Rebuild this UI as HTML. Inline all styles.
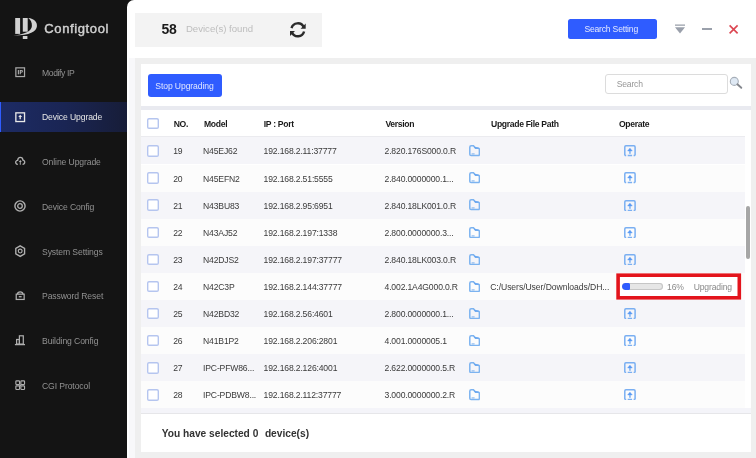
<!DOCTYPE html>
<html><head><meta charset="utf-8">
<style>
*{margin:0;padding:0;box-sizing:border-box}
html,body{width:756px;height:458px;overflow:hidden;background:#141414;font-family:"Liberation Sans",sans-serif}
#wrap{position:absolute;left:0;top:0;width:756px;height:458px;filter:blur(0.3px)}
.a{position:absolute}
.t{position:absolute;white-space:nowrap;line-height:1}
#side{left:0;top:0;width:127px;height:458px;background:#141414}
#main{left:126.5px;top:0;width:629.5px;height:458px;background:#fff;border-top-left-radius:7px}
.nav{left:42px;font-size:8.6px;color:#929292;letter-spacing:-0.1px}
.ico{left:14.9px;width:10.4px;height:10.4px;overflow:visible}
.hd{font-weight:bold;font-size:8.6px;color:#1a1a1a;letter-spacing:-0.32px}
.cell{font-size:8.6px;color:#3a3a3a;letter-spacing:-0.15px}
.cb{position:absolute;left:147.1px;width:11.6px;height:11.6px;box-shadow:inset 0 0 0 1.4px #b5c5ef;border-radius:2px;background:#fff}
.row{position:absolute;left:141px;width:604px;height:27.1px}
.g{background:#f5f5f9}
.w{background:#fcfcfc}
</style></head><body><div id="wrap">
<div id="side" class="a">
  <!-- logo -->
  <svg class="a" style="left:12px;top:16px" width="28" height="25" viewBox="0 0 28 25">
    <rect x="3.2" y="2" width="4.9" height="15.9" fill="#d2d2d2"/>
    <rect x="10.8" y="2" width="4.9" height="13.7" fill="#d2d2d2"/>
    <rect x="10.8" y="20" width="4.6" height="3" fill="#d2d2d2"/>
    <path d="M16.3 2 C 22 2.5 25.5 6 24.9 10.5 C 24.3 15.5 18 19.5 1.4 19.4 C 13 18.4 19.6 15.2 19.9 10 C 20.1 6.5 18.6 3.5 16.3 2 Z" fill="#d2d2d2"/>
  </svg>
  <div class="t" style="left:44.3px;top:21.8px;font-size:13px;font-weight:normal;-webkit-text-stroke:0.45px #d0d0d0;color:#d0d0d0;letter-spacing:0.62px">Configtool</div>

  <div class="a" style="left:0;top:101.8px;width:126.5px;height:29.9px;background:linear-gradient(90deg,#1d2b64 0%,#1a2554 50%,#171d38 100%);border-left:1px solid #2f5cff"></div>

  <!-- icons -->
  <svg class="a ico" style="top:66.80px" viewBox="0 0 11 11"><rect x="0.9" y="0.9" width="9.2" height="9.2" fill="none" stroke="#a8a8a8" stroke-width="1.3"/><rect x="3" y="3.2" width="1.1" height="4.6" fill="#b8b8b8"/><path d="M5 3.2 H7.2 Q8.3 3.2 8.3 4.5 Q8.3 5.8 7.2 5.8 H6.1 V7.8 H5 Z M6.1 4.1 V4.9 H7 Q7.3 4.9 7.3 4.5 Q7.3 4.1 7 4.1 Z" fill="#b8b8b8" fill-rule="evenodd"/></svg>
  <svg class="a ico" style="top:111.80px" viewBox="0 0 11 11"><rect x="0.9" y="0.9" width="9.2" height="9.2" fill="none" stroke="#e8e8e8" stroke-width="1.4"/><path d="M5.5 3 L7.6 5.4 H6.2 V7.8 H4.8 V5.4 H3.4 Z" fill="#e8e8e8"/></svg>
  <svg class="a ico" style="top:155.80px" viewBox="0 0 11 11"><path d="M3 8.8 C1 8.8 0.4 7 0.9 5.8 C1.3 4.9 2.2 4.5 2.8 4.6 C3 2.7 4.3 1.4 5.6 1.4 C7.2 1.4 8.3 2.7 8.4 4.4 C9.6 4.5 10.4 5.5 10.3 6.6 C10.2 7.9 9.2 8.8 8 8.8" fill="none" stroke="#b0b0b0" stroke-width="1.4"/><path d="M5.6 4.2 L7.2 6.4 H6.1 V9.2 H5.1 V6.4 H4 Z" fill="#b0b0b0"/></svg>
  <svg class="a ico" style="top:200.1px;left:14px;width:12px;height:12px" viewBox="0 0 12 12"><circle cx="6" cy="6" r="5.1" fill="none" stroke="#b0b0b0" stroke-width="1.4"/><circle cx="6" cy="6" r="2.3" fill="none" stroke="#b0b0b0" stroke-width="1.3"/></svg>
  <svg class="a ico" style="top:244.6px;left:15px;width:10.4px;height:12.2px" viewBox="0 0 10.4 12.2"><path d="M5.2 0.8 L9.6 3.3 V8.9 L5.2 11.4 L0.8 8.9 V3.3 Z" fill="none" stroke="#b0b0b0" stroke-width="1.35"/><circle cx="5.2" cy="6.1" r="1.9" fill="none" stroke="#b0b0b0" stroke-width="1.2"/></svg>
  <svg class="a ico" style="top:290.30px" viewBox="0 0 11 11"><rect x="1.3" y="4.4" width="8.4" height="5.6" fill="none" stroke="#b0b0b0" stroke-width="1.3"/><path d="M2.6 4.4 C2.8 1.2 8.2 1.2 8.4 4.4" fill="none" stroke="#b0b0b0" stroke-width="1.3"/><rect x="4" y="6.4" width="3" height="1.4" fill="#b0b0b0"/></svg>
  <svg class="a ico" style="top:334.8px" viewBox="0 0 10.4 10.4"><path d="M-0.1 9.6 H10" stroke="#b0b0b0" stroke-width="1.3"/><rect x="1.6" y="4.5" width="2.8" height="4.6" fill="none" stroke="#b0b0b0" stroke-width="1.2"/><rect x="4.4" y="0.8" width="3.9" height="8.3" fill="none" stroke="#b0b0b0" stroke-width="1.2"/></svg>
  <svg class="a ico" style="top:379.60px" viewBox="0 0 11 11"><g fill="none" stroke="#b0b0b0" stroke-width="1.2"><rect x="0.9" y="0.9" width="3.9" height="3.9" rx="0.8"/><rect x="6.2" y="0.9" width="3.9" height="3.9" rx="0.8"/><rect x="0.9" y="6.2" width="3.9" height="3.9" rx="0.8"/><rect x="6.2" y="6.2" width="3.9" height="3.9" rx="0.8"/><path d="M4.8 4.8 L6.2 6.2 M6.2 4.8 L4.8 6.2"/></g></svg>

  <div class="t nav" style="top:68.60px;letter-spacing:-0.4px">Modify IP</div>
  <div class="t nav" style="top:113.35px;color:#e6e6e6">Device Upgrade</div>
  <div class="t nav" style="top:158.10px">Online Upgrade</div>
  <div class="t nav" style="top:202.85px">Device Config</div>
  <div class="t nav" style="top:247.60px">System Settings</div>
  <div class="t nav" style="top:292.35px">Password Reset</div>
  <div class="t nav" style="top:337.10px">Building Config</div>
  <div class="t nav" style="top:381.85px">CGI Protocol</div>
</div>

<div id="main" class="a"></div>

<!-- header -->
<div class="a" style="left:135px;top:13px;width:187px;height:34px;background:#f3f3f3"></div>
<div class="t" style="left:161.5px;top:21.8px;font-size:14px;font-weight:bold;color:#1a1a1a;letter-spacing:-0.4px">58</div>
<div class="t" style="left:185.9px;top:24.4px;font-size:9.6px;color:#bdbdbd">Device(s) found</div>
<svg class="a" style="left:289.6px;top:21.8px" width="16" height="16" viewBox="0 0 16 16">
  <path d="M1.52 6.12 A6.5 6.5 0 0 1 13.69 5.05" fill="none" stroke="#2b2b2b" stroke-width="2.4"/>
  <path d="M14.08 9.48 A6.5 6.5 0 0 1 1.91 10.55" fill="none" stroke="#2b2b2b" stroke-width="2.4"/>
  <path d="M10.6 6.7 H15.7 V1.6 Z" fill="#2b2b2b"/>
  <path d="M5 8.9 H-0.1 V14 Z" fill="#2b2b2b"/>
</svg>

<div class="a" style="left:567.5px;top:18.5px;width:89px;height:20px;background:#2f5cff;border-radius:2.5px"></div>
<div class="t" style="left:584.4px;top:24.7px;font-size:8.6px;color:#e4e9ff;letter-spacing:-0.2px">Search Setting</div>

<svg class="a" style="left:674px;top:23px" width="12" height="12" viewBox="0 0 12 12">
  <rect x="1" y="1.4" width="10" height="1.5" fill="#a9aeb7"/>
  <path d="M1 4.2 H11 L6 10.4 Z" fill="#9aa0ab"/>
</svg>
<div class="a" style="left:702px;top:28.2px;width:10px;height:1.8px;background:#9aa0ab"></div>
<svg class="a" style="left:728px;top:24px" width="11" height="11" viewBox="0 0 11 11">
  <path d="M1.6 1.4 L9.6 9.4 M9.6 1.4 L1.6 9.4" stroke="#dc4652" stroke-width="1.6"/>
</svg>

<!-- content container -->
<div class="a" style="left:128.5px;top:57.5px;width:6.5px;height:400.5px;background:#f8f8fa"></div>
<div class="a" style="left:135px;top:57.5px;width:621px;height:400.5px;background:#efefef"></div>
<div class="a" style="left:141px;top:63.5px;width:609.5px;height:42.6px;background:#fff"></div>
<div class="a" style="left:141px;top:106.1px;width:609.5px;height:4.3px;background:#e9eaf0"></div>
<div class="a" style="left:141px;top:110.4px;width:609.5px;height:298px;background:#fff"></div>
<div class="a" style="left:141px;top:136px;width:604px;height:1.4px;background:#ebebef"></div>
<div class="a" style="left:141px;top:408.4px;width:609.5px;height:4.8px;background:#f4f4f9"></div>
<div class="a" style="left:141px;top:413.2px;width:609.5px;height:1px;background:#e6e6e9"></div>
<div class="a" style="left:141px;top:414.2px;width:609.5px;height:37.8px;background:#fff"></div>

<div class="a" style="left:147.5px;top:74px;width:74.5px;height:23px;background:#2f5cff;border-radius:3px"></div>
<div class="t" style="left:155.3px;top:82.2px;font-size:8.6px;color:#e0e6ff;letter-spacing:-0.1px">Stop Upgrading</div>

<div class="a" style="left:605px;top:73.6px;width:122.5px;height:20.4px;border:1px solid #dcdcdc;border-radius:3px;background:#fff"></div>
<div class="t" style="left:616.7px;top:80.2px;font-size:8.6px;color:#969696;letter-spacing:-0.2px">Search</div>
<svg class="a" style="left:729px;top:76px" width="15" height="14" viewBox="0 0 15 14">
  <circle cx="5.3" cy="5.4" r="4" fill="#dfe9f4" stroke="#a6aeb8" stroke-width="1.1"/>
  <path d="M8.4 8.3 L12.3 11.8" stroke="#85888e" stroke-width="1.9" stroke-linecap="round"/>
</svg>

<!-- table header -->
<div class="cb" style="top:117.7px"></div>
<div class="t hd" style="left:173.7px;top:119.9px">NO.</div>
<div class="t hd" style="left:204px;top:119.9px">Model</div>
<div class="t hd" style="left:263.8px;top:119.9px">IP : Port</div>
<div class="t hd" style="left:385.4px;top:119.9px">Version</div>
<div class="t hd" style="left:491px;top:119.9px">Upgrade File Path</div>
<div class="t hd" style="left:619px;top:119.9px">Operate</div>

<div id="rows"><div class="row g" style="top:137.40px"></div>
<div class="row w" style="top:164.50px"></div>
<div class="row g" style="top:191.60px"></div>
<div class="row w" style="top:218.70px"></div>
<div class="row g" style="top:245.80px"></div>
<div class="row w" style="top:272.90px"></div>
<div class="row g" style="top:300.00px"></div>
<div class="row w" style="top:327.10px"></div>
<div class="row g" style="top:354.20px"></div>
<div class="row w" style="top:381.30px"></div>
<div class="cb" style="top:145.20px"></div>
<div class="t cell" style="left:173.2px;top:147.45px">19</div>
<div class="t cell" style="left:203px;top:147.45px">N45EJ62</div>
<div class="t cell" style="left:263.5px;top:147.45px">192.168.2.11:37777</div>
<div class="t cell" style="left:384.5px;top:147.45px">2.820.176S000.0.R</div>
<svg class="a" style="left:469.3px;top:145.25px" width="11.2" height="11.4" viewBox="0 0 11.2 11.4"><path d="M0.8 2.2 Q0.8 0.8 2.2 0.8 H4.5 L6.5 3.2 H9.1 Q10.4 3.2 10.4 4.5 V9.2 Q10.4 10.6 9.1 10.6 H2.1 Q0.8 10.6 0.8 9.2 Z" fill="none" stroke="#7cb3f0" stroke-width="1.5"/><path d="M4.6 1.4 L6.3 3.4 H9.6 L9.6 2.6 Z" fill="#5d9ff0" opacity="0.8"/><path d="M2.6 8.9 H5.6" stroke="#7cb2ee" stroke-width="1"/></svg>
<svg class="a" style="left:624.1px;top:145.30px" width="11.9" height="11.3" viewBox="0 0 11.9 11.3"><path d="M0.8 10.5 V1.9 Q0.8 0.8 1.9 0.8 H10 Q11.1 0.8 11.1 1.9 V10.5" fill="none" stroke="#7aaff2" stroke-width="1.5"/><path d="M0.8 10.5 H2.2 M3.7 10.5 H8.1 M9.6 10.5 H11.1" stroke="#7aaff2" stroke-width="1.4"/><path d="M5.95 3.2 L8.2 5.9 H3.7 Z" fill="#5296f4" stroke="#5296f4" stroke-width="0.5" stroke-linejoin="round"/><rect x="5.15" y="5.8" width="1.6" height="3" fill="#80b4f3"/></svg>
<div class="cb" style="top:172.30px"></div>
<div class="t cell" style="left:173.2px;top:174.55px">20</div>
<div class="t cell" style="left:203px;top:174.55px">N45EFN2</div>
<div class="t cell" style="left:263.5px;top:174.55px">192.168.2.51:5555</div>
<div class="t cell" style="left:384.5px;top:174.55px">2.840.0000000.1...</div>
<svg class="a" style="left:469.3px;top:172.35px" width="11.2" height="11.4" viewBox="0 0 11.2 11.4"><path d="M0.8 2.2 Q0.8 0.8 2.2 0.8 H4.5 L6.5 3.2 H9.1 Q10.4 3.2 10.4 4.5 V9.2 Q10.4 10.6 9.1 10.6 H2.1 Q0.8 10.6 0.8 9.2 Z" fill="none" stroke="#7cb3f0" stroke-width="1.5"/><path d="M4.6 1.4 L6.3 3.4 H9.6 L9.6 2.6 Z" fill="#5d9ff0" opacity="0.8"/><path d="M2.6 8.9 H5.6" stroke="#7cb2ee" stroke-width="1"/></svg>
<svg class="a" style="left:624.1px;top:172.40px" width="11.9" height="11.3" viewBox="0 0 11.9 11.3"><path d="M0.8 10.5 V1.9 Q0.8 0.8 1.9 0.8 H10 Q11.1 0.8 11.1 1.9 V10.5" fill="none" stroke="#7aaff2" stroke-width="1.5"/><path d="M0.8 10.5 H2.2 M3.7 10.5 H8.1 M9.6 10.5 H11.1" stroke="#7aaff2" stroke-width="1.4"/><path d="M5.95 3.2 L8.2 5.9 H3.7 Z" fill="#5296f4" stroke="#5296f4" stroke-width="0.5" stroke-linejoin="round"/><rect x="5.15" y="5.8" width="1.6" height="3" fill="#80b4f3"/></svg>
<div class="cb" style="top:199.40px"></div>
<div class="t cell" style="left:173.2px;top:201.65px">21</div>
<div class="t cell" style="left:203px;top:201.65px">N43BU83</div>
<div class="t cell" style="left:263.5px;top:201.65px">192.168.2.95:6951</div>
<div class="t cell" style="left:384.5px;top:201.65px">2.840.18LK001.0.R</div>
<svg class="a" style="left:469.3px;top:199.45px" width="11.2" height="11.4" viewBox="0 0 11.2 11.4"><path d="M0.8 2.2 Q0.8 0.8 2.2 0.8 H4.5 L6.5 3.2 H9.1 Q10.4 3.2 10.4 4.5 V9.2 Q10.4 10.6 9.1 10.6 H2.1 Q0.8 10.6 0.8 9.2 Z" fill="none" stroke="#7cb3f0" stroke-width="1.5"/><path d="M4.6 1.4 L6.3 3.4 H9.6 L9.6 2.6 Z" fill="#5d9ff0" opacity="0.8"/><path d="M2.6 8.9 H5.6" stroke="#7cb2ee" stroke-width="1"/></svg>
<svg class="a" style="left:624.1px;top:199.50px" width="11.9" height="11.3" viewBox="0 0 11.9 11.3"><path d="M0.8 10.5 V1.9 Q0.8 0.8 1.9 0.8 H10 Q11.1 0.8 11.1 1.9 V10.5" fill="none" stroke="#7aaff2" stroke-width="1.5"/><path d="M0.8 10.5 H2.2 M3.7 10.5 H8.1 M9.6 10.5 H11.1" stroke="#7aaff2" stroke-width="1.4"/><path d="M5.95 3.2 L8.2 5.9 H3.7 Z" fill="#5296f4" stroke="#5296f4" stroke-width="0.5" stroke-linejoin="round"/><rect x="5.15" y="5.8" width="1.6" height="3" fill="#80b4f3"/></svg>
<div class="cb" style="top:226.50px"></div>
<div class="t cell" style="left:173.2px;top:228.75px">22</div>
<div class="t cell" style="left:203px;top:228.75px">N43AJ52</div>
<div class="t cell" style="left:263.5px;top:228.75px">192.168.2.197:1338</div>
<div class="t cell" style="left:384.5px;top:228.75px">2.800.0000000.3...</div>
<svg class="a" style="left:469.3px;top:226.55px" width="11.2" height="11.4" viewBox="0 0 11.2 11.4"><path d="M0.8 2.2 Q0.8 0.8 2.2 0.8 H4.5 L6.5 3.2 H9.1 Q10.4 3.2 10.4 4.5 V9.2 Q10.4 10.6 9.1 10.6 H2.1 Q0.8 10.6 0.8 9.2 Z" fill="none" stroke="#7cb3f0" stroke-width="1.5"/><path d="M4.6 1.4 L6.3 3.4 H9.6 L9.6 2.6 Z" fill="#5d9ff0" opacity="0.8"/><path d="M2.6 8.9 H5.6" stroke="#7cb2ee" stroke-width="1"/></svg>
<svg class="a" style="left:624.1px;top:226.60px" width="11.9" height="11.3" viewBox="0 0 11.9 11.3"><path d="M0.8 10.5 V1.9 Q0.8 0.8 1.9 0.8 H10 Q11.1 0.8 11.1 1.9 V10.5" fill="none" stroke="#7aaff2" stroke-width="1.5"/><path d="M0.8 10.5 H2.2 M3.7 10.5 H8.1 M9.6 10.5 H11.1" stroke="#7aaff2" stroke-width="1.4"/><path d="M5.95 3.2 L8.2 5.9 H3.7 Z" fill="#5296f4" stroke="#5296f4" stroke-width="0.5" stroke-linejoin="round"/><rect x="5.15" y="5.8" width="1.6" height="3" fill="#80b4f3"/></svg>
<div class="cb" style="top:253.60px"></div>
<div class="t cell" style="left:173.2px;top:255.85px">23</div>
<div class="t cell" style="left:203px;top:255.85px">N42DJS2</div>
<div class="t cell" style="left:263.5px;top:255.85px">192.168.2.197:37777</div>
<div class="t cell" style="left:384.5px;top:255.85px">2.840.18LK003.0.R</div>
<svg class="a" style="left:469.3px;top:253.65px" width="11.2" height="11.4" viewBox="0 0 11.2 11.4"><path d="M0.8 2.2 Q0.8 0.8 2.2 0.8 H4.5 L6.5 3.2 H9.1 Q10.4 3.2 10.4 4.5 V9.2 Q10.4 10.6 9.1 10.6 H2.1 Q0.8 10.6 0.8 9.2 Z" fill="none" stroke="#7cb3f0" stroke-width="1.5"/><path d="M4.6 1.4 L6.3 3.4 H9.6 L9.6 2.6 Z" fill="#5d9ff0" opacity="0.8"/><path d="M2.6 8.9 H5.6" stroke="#7cb2ee" stroke-width="1"/></svg>
<svg class="a" style="left:624.1px;top:253.70px" width="11.9" height="11.3" viewBox="0 0 11.9 11.3"><path d="M0.8 10.5 V1.9 Q0.8 0.8 1.9 0.8 H10 Q11.1 0.8 11.1 1.9 V10.5" fill="none" stroke="#7aaff2" stroke-width="1.5"/><path d="M0.8 10.5 H2.2 M3.7 10.5 H8.1 M9.6 10.5 H11.1" stroke="#7aaff2" stroke-width="1.4"/><path d="M5.95 3.2 L8.2 5.9 H3.7 Z" fill="#5296f4" stroke="#5296f4" stroke-width="0.5" stroke-linejoin="round"/><rect x="5.15" y="5.8" width="1.6" height="3" fill="#80b4f3"/></svg>
<div class="cb" style="top:280.70px"></div>
<div class="t cell" style="left:173.2px;top:282.95px">24</div>
<div class="t cell" style="left:203px;top:282.95px">N42C3P</div>
<div class="t cell" style="left:263.5px;top:282.95px">192.168.2.144:37777</div>
<div class="t cell" style="left:384.5px;top:282.95px">4.002.1A4G000.0.R</div>
<svg class="a" style="left:469.3px;top:280.75px" width="11.2" height="11.4" viewBox="0 0 11.2 11.4"><path d="M0.8 2.2 Q0.8 0.8 2.2 0.8 H4.5 L6.5 3.2 H9.1 Q10.4 3.2 10.4 4.5 V9.2 Q10.4 10.6 9.1 10.6 H2.1 Q0.8 10.6 0.8 9.2 Z" fill="none" stroke="#7cb3f0" stroke-width="1.5"/><path d="M4.6 1.4 L6.3 3.4 H9.6 L9.6 2.6 Z" fill="#5d9ff0" opacity="0.8"/><path d="M2.6 8.9 H5.6" stroke="#7cb2ee" stroke-width="1"/></svg>
<div class="t cell" style="left:490.2px;top:282.95px;letter-spacing:-0.06px">C:/Users/User/Downloads/DH...</div>
<svg class="a" style="left:616px;top:273px" width="126" height="27" viewBox="0 0 126 27"><rect x="0" y="0" width="126" height="27" fill="#fff" opacity="0"/><rect x="2.1" y="2.2" width="121.2" height="22.6" fill="#fff" stroke="#e3141c" stroke-width="3.6"/></svg>
<div class="a" style="left:622.3px;top:283px;width:41px;height:6.8px;border-radius:3.4px;background:#e6e6e6;box-shadow:inset 0 0 0 1.1px #c6c6c6;overflow:hidden"><div style="width:7.3px;height:100%;background:#2f5cff;border-radius:3.4px 1.5px 1.5px 3.4px"></div></div>
<div class="t cell" style="left:667px;top:282.95px;color:#8a8a8a">16%</div>
<div class="t cell" style="left:693.7px;top:282.95px;color:#8a8a8a">Upgrading</div>
<div class="cb" style="top:307.80px"></div>
<div class="t cell" style="left:173.2px;top:310.05px">25</div>
<div class="t cell" style="left:203px;top:310.05px">N42BD32</div>
<div class="t cell" style="left:263.5px;top:310.05px">192.168.2.56:4601</div>
<div class="t cell" style="left:384.5px;top:310.05px">2.800.0000000.1...</div>
<svg class="a" style="left:469.3px;top:307.85px" width="11.2" height="11.4" viewBox="0 0 11.2 11.4"><path d="M0.8 2.2 Q0.8 0.8 2.2 0.8 H4.5 L6.5 3.2 H9.1 Q10.4 3.2 10.4 4.5 V9.2 Q10.4 10.6 9.1 10.6 H2.1 Q0.8 10.6 0.8 9.2 Z" fill="none" stroke="#7cb3f0" stroke-width="1.5"/><path d="M4.6 1.4 L6.3 3.4 H9.6 L9.6 2.6 Z" fill="#5d9ff0" opacity="0.8"/><path d="M2.6 8.9 H5.6" stroke="#7cb2ee" stroke-width="1"/></svg>
<svg class="a" style="left:624.1px;top:307.90px" width="11.9" height="11.3" viewBox="0 0 11.9 11.3"><path d="M0.8 10.5 V1.9 Q0.8 0.8 1.9 0.8 H10 Q11.1 0.8 11.1 1.9 V10.5" fill="none" stroke="#7aaff2" stroke-width="1.5"/><path d="M0.8 10.5 H2.2 M3.7 10.5 H8.1 M9.6 10.5 H11.1" stroke="#7aaff2" stroke-width="1.4"/><path d="M5.95 3.2 L8.2 5.9 H3.7 Z" fill="#5296f4" stroke="#5296f4" stroke-width="0.5" stroke-linejoin="round"/><rect x="5.15" y="5.8" width="1.6" height="3" fill="#80b4f3"/></svg>
<div class="cb" style="top:334.90px"></div>
<div class="t cell" style="left:173.2px;top:337.15px">26</div>
<div class="t cell" style="left:203px;top:337.15px">N41B1P2</div>
<div class="t cell" style="left:263.5px;top:337.15px">192.168.2.206:2801</div>
<div class="t cell" style="left:384.5px;top:337.15px">4.001.0000005.1</div>
<svg class="a" style="left:469.3px;top:334.95px" width="11.2" height="11.4" viewBox="0 0 11.2 11.4"><path d="M0.8 2.2 Q0.8 0.8 2.2 0.8 H4.5 L6.5 3.2 H9.1 Q10.4 3.2 10.4 4.5 V9.2 Q10.4 10.6 9.1 10.6 H2.1 Q0.8 10.6 0.8 9.2 Z" fill="none" stroke="#7cb3f0" stroke-width="1.5"/><path d="M4.6 1.4 L6.3 3.4 H9.6 L9.6 2.6 Z" fill="#5d9ff0" opacity="0.8"/><path d="M2.6 8.9 H5.6" stroke="#7cb2ee" stroke-width="1"/></svg>
<svg class="a" style="left:624.1px;top:335.00px" width="11.9" height="11.3" viewBox="0 0 11.9 11.3"><path d="M0.8 10.5 V1.9 Q0.8 0.8 1.9 0.8 H10 Q11.1 0.8 11.1 1.9 V10.5" fill="none" stroke="#7aaff2" stroke-width="1.5"/><path d="M0.8 10.5 H2.2 M3.7 10.5 H8.1 M9.6 10.5 H11.1" stroke="#7aaff2" stroke-width="1.4"/><path d="M5.95 3.2 L8.2 5.9 H3.7 Z" fill="#5296f4" stroke="#5296f4" stroke-width="0.5" stroke-linejoin="round"/><rect x="5.15" y="5.8" width="1.6" height="3" fill="#80b4f3"/></svg>
<div class="cb" style="top:362.00px"></div>
<div class="t cell" style="left:173.2px;top:364.25px">27</div>
<div class="t cell" style="left:203px;top:364.25px">IPC-PFW86...</div>
<div class="t cell" style="left:263.5px;top:364.25px">192.168.2.126:4001</div>
<div class="t cell" style="left:384.5px;top:364.25px">2.622.0000000.5.R</div>
<svg class="a" style="left:469.3px;top:362.05px" width="11.2" height="11.4" viewBox="0 0 11.2 11.4"><path d="M0.8 2.2 Q0.8 0.8 2.2 0.8 H4.5 L6.5 3.2 H9.1 Q10.4 3.2 10.4 4.5 V9.2 Q10.4 10.6 9.1 10.6 H2.1 Q0.8 10.6 0.8 9.2 Z" fill="none" stroke="#7cb3f0" stroke-width="1.5"/><path d="M4.6 1.4 L6.3 3.4 H9.6 L9.6 2.6 Z" fill="#5d9ff0" opacity="0.8"/><path d="M2.6 8.9 H5.6" stroke="#7cb2ee" stroke-width="1"/></svg>
<svg class="a" style="left:624.1px;top:362.10px" width="11.9" height="11.3" viewBox="0 0 11.9 11.3"><path d="M0.8 10.5 V1.9 Q0.8 0.8 1.9 0.8 H10 Q11.1 0.8 11.1 1.9 V10.5" fill="none" stroke="#7aaff2" stroke-width="1.5"/><path d="M0.8 10.5 H2.2 M3.7 10.5 H8.1 M9.6 10.5 H11.1" stroke="#7aaff2" stroke-width="1.4"/><path d="M5.95 3.2 L8.2 5.9 H3.7 Z" fill="#5296f4" stroke="#5296f4" stroke-width="0.5" stroke-linejoin="round"/><rect x="5.15" y="5.8" width="1.6" height="3" fill="#80b4f3"/></svg>
<div class="cb" style="top:389.10px"></div>
<div class="t cell" style="left:173.2px;top:391.35px">28</div>
<div class="t cell" style="left:203px;top:391.35px">IPC-PDBW8...</div>
<div class="t cell" style="left:263.5px;top:391.35px">192.168.2.112:37777</div>
<div class="t cell" style="left:384.5px;top:391.35px">3.000.0000000.2.R</div>
<svg class="a" style="left:469.3px;top:389.15px" width="11.2" height="11.4" viewBox="0 0 11.2 11.4"><path d="M0.8 2.2 Q0.8 0.8 2.2 0.8 H4.5 L6.5 3.2 H9.1 Q10.4 3.2 10.4 4.5 V9.2 Q10.4 10.6 9.1 10.6 H2.1 Q0.8 10.6 0.8 9.2 Z" fill="none" stroke="#7cb3f0" stroke-width="1.5"/><path d="M4.6 1.4 L6.3 3.4 H9.6 L9.6 2.6 Z" fill="#5d9ff0" opacity="0.8"/><path d="M2.6 8.9 H5.6" stroke="#7cb2ee" stroke-width="1"/></svg>
<svg class="a" style="left:624.1px;top:389.20px" width="11.9" height="11.3" viewBox="0 0 11.9 11.3"><path d="M0.8 10.5 V1.9 Q0.8 0.8 1.9 0.8 H10 Q11.1 0.8 11.1 1.9 V10.5" fill="none" stroke="#7aaff2" stroke-width="1.5"/><path d="M0.8 10.5 H2.2 M3.7 10.5 H8.1 M9.6 10.5 H11.1" stroke="#7aaff2" stroke-width="1.4"/><path d="M5.95 3.2 L8.2 5.9 H3.7 Z" fill="#5296f4" stroke="#5296f4" stroke-width="0.5" stroke-linejoin="round"/><rect x="5.15" y="5.8" width="1.6" height="3" fill="#80b4f3"/></svg></div><!--/rows-->

<!-- scrollbar -->
<div class="a" style="left:746.2px;top:206px;width:4.2px;height:52.5px;background:#a6a6a6;border-radius:2px"></div>

<div class="t" style="left:161.7px;top:428.5px;font-size:10.2px;font-weight:bold;color:#333;letter-spacing:0px">You have selected 0&nbsp; <span style="margin-left:0.9px">device(s)</span></div>

</div></body></html>
